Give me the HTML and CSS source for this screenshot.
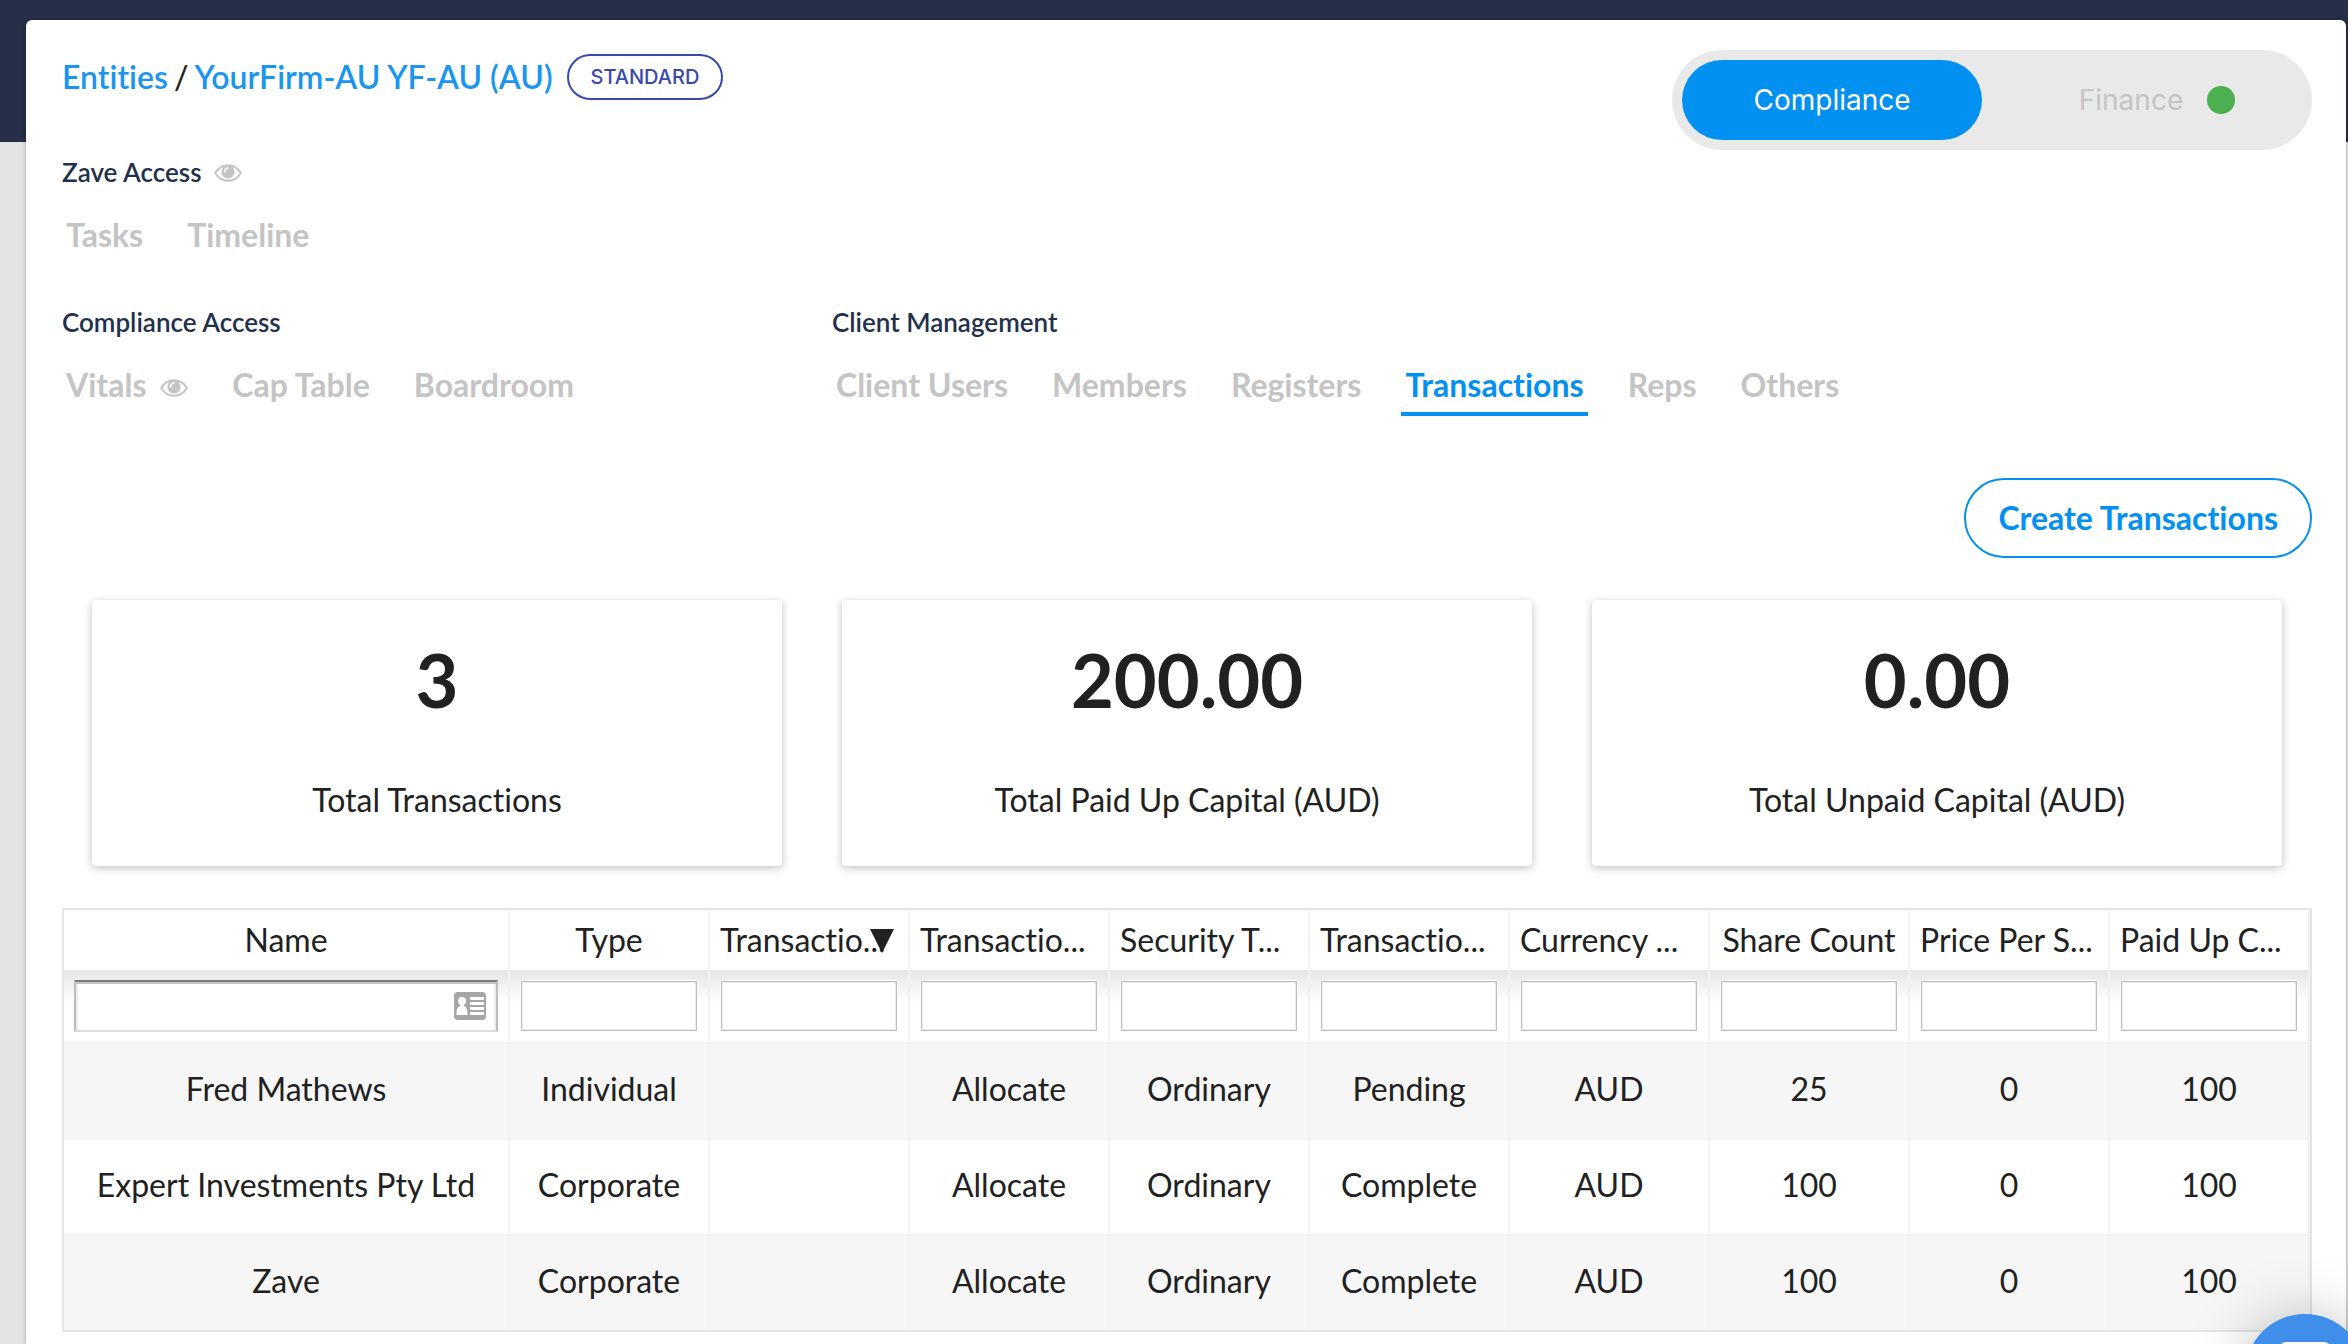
FILE: index.html
```html
<!DOCTYPE html>
<html lang="en">
<head>
    <meta charset="UTF-8">
    <meta name="viewport" content="width=device-width, initial-scale=1.0">
    <title>Transactions</title>
    <link rel="stylesheet" href="styles.css">
</head>
<body>
    <svg class="sprite" aria-hidden="true">
        <symbol id="eye" viewBox="0 0 28 18">
            <path d="M1.200 9C4 4.200 8.600 1.200 14 1.200S24 4.200 26.800 9C24 13.800 19.400 16.800 14 16.800S4 13.800 1.200 9z" fill="none" stroke="currentColor" stroke-width="2"/>
            <circle cx="14" cy="7.800" r="6.600" fill="currentColor"/>
            <path d="M10.600 8c0-2.200 1.300-3.800 3.400-4" fill="none" stroke="#fff" stroke-width="1.600" stroke-linecap="round"/>
        </symbol>
    </svg>

    <main class="page">
        <header class="header">
            <div class="breadcrumb">
                <a href="#">Entities</a>
                <span>/</span>
                <a href="#">YourFirm-AU YF-AU (AU)</a>
                <span class="chip">STANDARD</span>
            </div>
            <div class="switch">
                <button type="button" class="switch-item active">Compliance</button>
                <button type="button" class="switch-item finance">Finance <i class="dot"></i></button>
            </div>
        </header>

        <section class="group">
            <h2>Zave Access <svg class="eye"><use href="#eye"/></svg></h2>
            <nav class="tabs">
                <a href="#">Tasks</a>
                <a href="#">Timeline</a>
            </nav>
        </section>

        <div class="groups">
            <section class="group">
                <h2>Compliance Access</h2>
                <nav class="tabs">
                    <a href="#">Vitals <svg class="eye"><use href="#eye"/></svg></a>
                    <a href="#">Cap Table</a>
                    <a href="#">Boardroom</a>
                </nav>
            </section>
            <section class="group">
                <h2>Client Management</h2>
                <nav class="tabs">
                    <a href="#">Client Users</a>
                    <a href="#">Members</a>
                    <a href="#">Registers</a>
                    <a href="#" class="active">Transactions</a>
                    <a href="#">Reps</a>
                    <a href="#">Others</a>
                </nav>
            </section>
        </div>

        <div class="actions">
            <button type="button" class="create">Create Transactions</button>
        </div>

        <div class="cards">
            <div class="card">
                <strong>3</strong>
                <span>Total Transactions</span>
            </div>
            <div class="card">
                <strong>200.00</strong>
                <span>Total Paid Up Capital (AUD)</span>
            </div>
            <div class="card">
                <strong>0.00</strong>
                <span>Total Unpaid Capital (AUD)</span>
            </div>
        </div>

        <table class="grid">
            <colgroup>
                <col class="col-name">
                <col span="9">
            </colgroup>
            <thead>
                <tr class="titles">
                    <th>Name</th>
                    <th>Type</th>
                    <th class="clipped sorted">Transactio...</th>
                    <th class="clipped">Transactio...</th>
                    <th class="clipped">Security T...</th>
                    <th class="clipped">Transactio...</th>
                    <th class="clipped">Currency ...</th>
                    <th>Share Count</th>
                    <th class="clipped">Price Per S...</th>
                    <th class="clipped">Paid Up C...</th>
                </tr>
                <tr class="filters">
                    <td class="filter-name">
                        <input type="text" aria-label="Name">
                        <svg class="id-card" viewBox="0 0 32 28">
                            <rect width="32" height="28" rx="4" fill="#a6a6a6"/>
                            <circle cx="8" cy="9" r="4" fill="#fff"/>
                            <path d="M6 12h4v2c2.500 1 3.500 3 3.500 9h-11c0-6 1-8 3.500-9z" fill="#fff"/>
                            <path d="M16 5h14v3H16zM16 10h14v3H16zM16 15h14v3H16zM16 20h14v3H16z" fill="#fff"/>
                        </svg>
                    </td>
                    <td><input type="text" aria-label="Type"></td>
                    <td><input type="text" aria-label="Transaction"></td>
                    <td><input type="text" aria-label="Transaction"></td>
                    <td><input type="text" aria-label="Security"></td>
                    <td><input type="text" aria-label="Transaction"></td>
                    <td><input type="text" aria-label="Currency"></td>
                    <td><input type="text" aria-label="Share Count"></td>
                    <td><input type="text" aria-label="Price"></td>
                    <td><input type="text" aria-label="Paid Up"></td>
                </tr>
            </thead>
            <tbody>
                <tr>
                    <td>Fred Mathews</td>
                    <td>Individual</td>
                    <td></td>
                    <td>Allocate</td>
                    <td>Ordinary</td>
                    <td>Pending</td>
                    <td>AUD</td>
                    <td>25</td>
                    <td>0</td>
                    <td>100</td>
                </tr>
                <tr>
                    <td>Expert Investments Pty Ltd</td>
                    <td>Corporate</td>
                    <td></td>
                    <td>Allocate</td>
                    <td>Ordinary</td>
                    <td>Complete</td>
                    <td>AUD</td>
                    <td>100</td>
                    <td>0</td>
                    <td>100</td>
                </tr>
                <tr>
                    <td>Zave</td>
                    <td>Corporate</td>
                    <td></td>
                    <td>Allocate</td>
                    <td>Ordinary</td>
                    <td>Complete</td>
                    <td>AUD</td>
                    <td>100</td>
                    <td>0</td>
                    <td>100</td>
                </tr>
            </tbody>
        </table>
    </main>

    <button type="button" class="chat" aria-label="Chat">
        <svg viewBox="0 0 52 56"><rect width="52" height="44" rx="7" fill="#fff"/><path d="M36 42h12v14z" fill="#fff"/></svg>
    </button>
</body>
</html>
```
FILE: styles.css
```css
* {
    box-sizing: border-box;
}
body {
    margin: 0;
    min-height: 100vh;
    padding: 20px 2px 0 26px;
    display: flex;
    overflow: hidden;
    font-family: Lato, "Open Sans", sans-serif;
    font-size: 32px;
    font-variant-ligatures: none;
    line-height: 40px;
    color: #212121;
    background: linear-gradient(#272e48 142px, #e3e3e3 142px);
}
a {
    color: #1a96f0;
    text-decoration: none;
}
button {
    font: inherit;
    font-variant-ligatures: none;
    cursor: pointer;
}
.sprite {
    position: absolute;
    width: 0;
    height: 0;
}
.page {
    flex: 1;
    min-width: 0;
    padding: 30px 34px 0 36px;
    background: #fff;
    border-radius: 6px 6px 0 0;
    box-shadow: 0 0 4px rgba(0, 0, 0, 0.3);
}

/* Header */
.header {
    display: flex;
    justify-content: space-between;
    align-items: flex-start;
    margin-bottom: 6px;
}
.breadcrumb {
    display: flex;
    align-items: center;
    gap: 6px;
    padding-top: 4px;
    font-weight: 600;
}
.breadcrumb span {
    font-weight: 500;
}
.breadcrumb .chip {
    margin-left: 8px;
    padding: 0 22px;
    border: 2px solid #3949ab;
    border-radius: 23px;
    font-family: Inter, sans-serif;
    font-size: 20px;
    line-height: 42px;
    color: #3949ab;
}
.switch {
    display: flex;
    width: 640px;
    padding: 10px;
    border-radius: 50px;
    background: #e9e9e9;
}
.switch-item {
    flex: 1;
    display: flex;
    justify-content: center;
    align-items: center;
    gap: 24px;
    height: 80px;
    border: 0;
    border-radius: 40px;
    background: none;
    font-family: Inter, sans-serif;
    font-size: 28px;
    color: #c4c4c4;
}
.switch-item.active {
    flex: 0 0 300px;
    background: #0290f1;
    color: #fff;
}
.switch-item.finance {
    padding-left: 36px;
}
.dot {
    width: 28px;
    height: 28px;
    border-radius: 50%;
    background: #4caf50;
}

/* Navigation groups */
.group {
    margin-bottom: 40px;
}
.groups {
    display: grid;
    grid-template-columns: 770px 1fr;
    margin-bottom: 62px;
}
.groups .group {
    margin-bottom: 0;
}
h2 {
    margin: 0 0 28px;
    font-size: 26px;
    font-weight: 600;
    line-height: 32px;
    color: #22304d;
}
.eye {
    width: 28px;
    height: 18px;
    margin-left: 6px;
    color: #c4c4c4;
}
.tabs {
    display: flex;
    gap: 36px;
}
.tabs a {
    padding: 0 4px 8px;
    border-bottom: 4px solid transparent;
    font-weight: 700;
    line-height: 38px;
    color: #c4c4c4;
}
.tabs a.active {
    color: #0290f1;
    border-color: #0290f1;
}

.actions {
    display: flex;
    justify-content: flex-end;
    margin-bottom: 42px;
}
.create {
    height: 80px;
    padding: 0 32px;
    border: 2px solid #0290f1;
    border-radius: 40px;
    background: #fff;
    font-weight: 700;
    color: #0290f1;
}

/* Totals */
.cards {
    display: grid;
    grid-template-columns: repeat(3, 1fr);
    gap: 60px;
    margin: 0 30px 42px;
}
.card {
    display: flex;
    flex-direction: column;
    align-items: center;
    gap: 60px;
    height: 266px;
    padding-top: 40px;
    border-radius: 4px;
    box-shadow: 0 2px 8px rgba(0, 0, 0, 0.25);
}
.card strong {
    font-size: 74px;
    font-weight: 700;
    line-height: 80px;
}

/* Table */
.grid {
    width: 100%;
    table-layout: fixed;
    border-collapse: separate;
    border-spacing: 0;
    border: 2px solid #e4e4e4;
}
.col-name {
    width: 446px;
}
.grid th,
.grid td {
    padding: 0 10px;
    border-right: 2px solid #f2f2f2;
    font-weight: 400;
    text-align: center;
    white-space: nowrap;
}
.titles th {
    height: 60px;
}
.titles .clipped {
    text-align: left;
}
.sorted {
    position: relative;
}
.sorted::after {
    content: "";
    position: absolute;
    top: 19px;
    right: 14px;
    border: 12px solid transparent;
    border-top: 24px solid #212121;
    border-bottom: 0;
}
.grid .filters td {
    height: 72px;
    padding: 0 11px;
    background: linear-gradient(#e6e6e6, #fff 32px);
}
.filters input {
    display: block;
    width: 100%;
    height: 50px;
    border: 1px solid #bdbdbd;
    background: #fff;
    box-shadow: 0 0 0 1px #fff, inset 0 0 0 1px #ededed;
    font: inherit;
}
.grid .filters .filter-name {
    position: relative;
    padding: 0 10px;
}
.filter-name input {
    height: 52px;
    border-width: 2px;
    border-color: #7b7b7b #bdbdbd #dcdcdc;
    box-shadow: inset 0 2px #c4c4c4, inset 2px 0 #ececec, inset -2px 0 #ececec;
}
.id-card {
    position: absolute;
    top: 22px;
    right: 22px;
    width: 32px;
    height: 28px;
}
.grid tbody td {
    height: 96px;
    padding-bottom: 4px;
    border-top: 2px solid #f2f2f2;
}
tbody tr:nth-child(odd) {
    background: #f6f6f6;
}

.chat {
    position: fixed;
    right: -17px;
    bottom: -90px;
    display: flex;
    justify-content: center;
    align-items: flex-start;
    width: 120px;
    height: 120px;
    padding: 28px 0 0;
    border: 0;
    border-radius: 50%;
    background: #3f8eea;
    box-shadow: 0 2px 60px rgba(0, 0, 0, 0.25);
}
.chat svg {
    width: 52px;
    height: 56px;
}
```
